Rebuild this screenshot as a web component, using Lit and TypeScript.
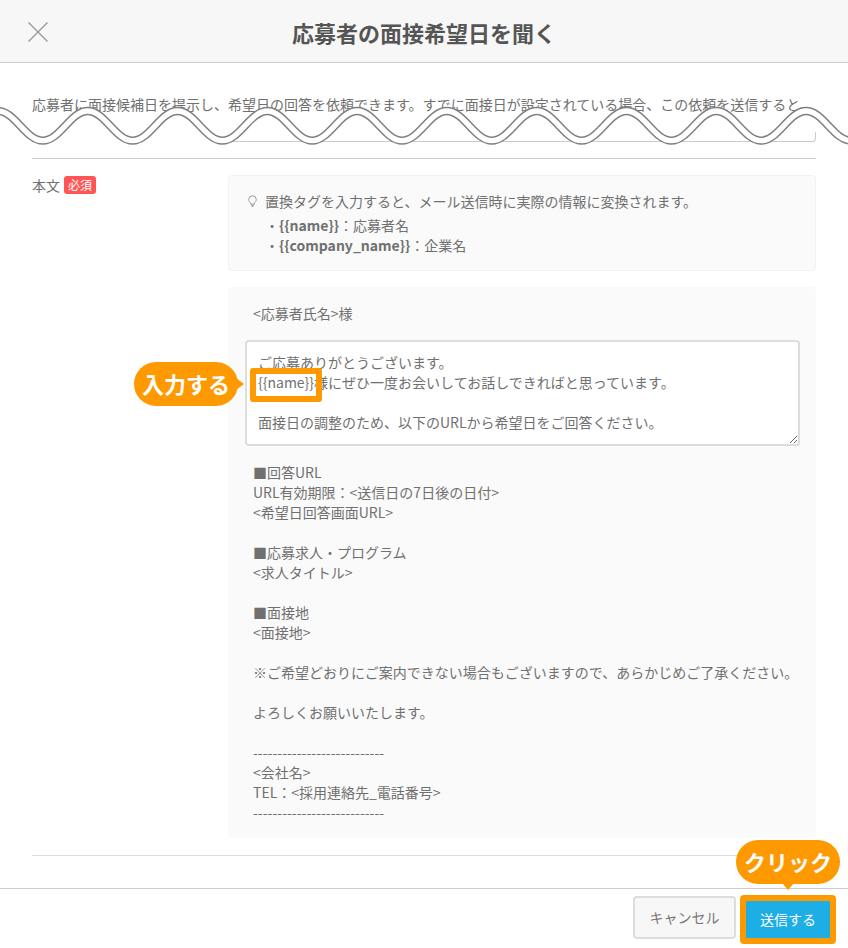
import { LitElement, html, css, svg } from "lit";
import { customElement } from "lit/decorators.js";

const MAIL_TAIL = `■回答URL
URL有効期限：<送信日の7日後の日付>
<希望日回答画面URL>

■応募求人・プログラム
<求人タイトル>

■面接地
<面接地>

※ご希望どおりにご案内できない場合もございますので、あらかじめご了承ください。

よろしくお願いいたします。

---------------------------
<会社名>
TEL：<採用連絡先_電話番号>
---------------------------`;

function wavePath(): string {
  const half = 44.9;
  const top = 111;
  const bottom = 140.7;
  let x = -47;
  let d = `M${x} ${bottom}`;
  let up = true;
  while (x < 880) {
    const y = up ? top : bottom;
    const from = up ? bottom : top;
    d += ` C${(x + 17).toFixed(1)} ${from} ${(x + half - 17).toFixed(1)} ${y} ${(x + half).toFixed(1)} ${y}`;
    x += half;
    up = !up;
  }
  return d;
}

@customElement("app-root")
export class AppRoot extends LitElement {
  static styles = css`
    :host {
      display: block;
      width: 848px;
      height: 948px;
      position: relative;
      overflow: hidden;
      background: #fff;
      color: #707070;
      font-family: "Noto Sans CJK JP", "Noto Sans", sans-serif;
      font-size: 14px;
      line-height: 20px;
    }
    .page { display: flex; flex-direction: column; height: 948px; }
    .head {
      height: 62px;
      flex: none;
      background: #f7f7f7;
      border-bottom: 1px solid #ccc;
      display: flex;
      align-items: center;
      justify-content: center;
      position: relative;
    }
    .close { position: absolute; left: 27px; top: 21px; width: 22px; height: 22px; }
    .title { font-size: 22px; font-weight: 700; color: #555; line-height: 28px; margin-top: 2px; }
    .body { flex: 1; padding: 31px 32px 0; overflow: hidden; }
    .intro { white-space: nowrap; overflow: hidden; height: 20px; }
    .stub {
      margin: 18px 0 0 196px;
      height: 10px;
      box-sizing: border-box;
      border-bottom: 1px solid #ccc;
      border-right: 1px solid #ccc;
      border-radius: 0 0 4px 0;
    }
    .rule { height: 1px; background: #ccc; margin-top: 16px; }
    .rule.end { margin-top: 17px; background: #ddd; }
    .row { display: grid; grid-template-columns: 196px 588px; margin-top: 16px; }
    .label { display: flex; align-items: flex-start; gap: 4px; line-height: 18px; margin-top: 1px; }
    .req {
      background: #f55;
      color: #fff;
      font-size: 12px;
      line-height: 17px;
      height: 18px;
      width: 32px;
      text-align: center;
      border-radius: 3px;
    }
    .info {
      box-sizing: border-box;
      height: 96px;
      padding: 15px 16px 14px;
      background: #fafafa;
      border: 1px solid #f2f2f2;
      border-radius: 4px;
    }
    .tip { display: flex; align-items: center; gap: 8px; margin-bottom: 4px; }
    .tip svg { width: 9px; height: 12px; flex: none; margin-left: 3px; }
    .tag { padding-left: 20px; }
    .tag b { font-weight: 700; }
    .mail {
      margin-top: 16px;
      background: #fafafa;
      border-radius: 4px;
      padding: 16px 0 15px 17px;
      height: 551px;
      box-sizing: border-box;
    }
    .mail-head { padding-left: 8px; }
    textarea {
      display: block;
      box-sizing: border-box;
      width: 555px;
      height: 106px;
      margin: 17px 0 16px;
      padding: 10px 11px;
      border: 2px solid #ddd;
      border-radius: 4px;
      background: #fff;
      color: #707070;
      font: inherit;
      overflow: hidden;
      resize: vertical;
      outline: none;
    }
    .mail-tail { white-space: pre-line; padding-left: 8px; }
    .foot {
      height: 60px;
      flex: none;
      box-sizing: border-box;
      border-top: 1px solid #ccc;
      display: flex;
      justify-content: flex-end;
      align-items: flex-start;
      gap: 4px;
      padding: 7px 12px 0 0;
    }
    button { font: inherit; cursor: pointer; box-sizing: border-box; }
    .cancel {
      width: 103px;
      height: 43px;
      background: #f7f7f7;
      color: #777;
      border: 2px solid #ddd;
      border-radius: 4px;
      padding: 0 0 2px;
    }
    .send {
      width: 96px;
      height: 49px;
      margin-top: -1px;
      background: #1eaee6;
      color: #fff;
      border: 6px solid #ff9900;
      border-radius: 4px;
      padding: 0 0 2px;
    }
    .wave { position: absolute; left: 0; top: 0; width: 848px; height: 160px; pointer-events: none; }
    .hl {
      position: absolute;
      left: 250px;
      top: 368px;
      width: 72px;
      height: 34px;
      box-sizing: border-box;
      border: 6px solid #ff9900;
      border-radius: 3px;
    }
    .bubble {
      position: absolute;
      width: 104px;
      height: 44px;
      border-radius: 22px;
      background: #ff9900;
      color: #fff;
      font-size: 22px;
      font-weight: 700;
      line-height: 42px;
      text-align: center;
    }
    .bubble.input { left: 134px; top: 362px; }
    .bubble.input::after {
      content: "";
      position: absolute;
      left: 102px;
      top: 16px;
      border-left: 8px solid #ff9900;
      border-top: 6px solid transparent;
      border-bottom: 6px solid transparent;
    }
    .bubble.click { left: 736px; top: 840px; }
    .bubble.click::after {
      content: "";
      position: absolute;
      left: 46px;
      top: 43px;
      border-top: 7px solid #ff9900;
      border-left: 6px solid transparent;
      border-right: 6px solid transparent;
    }
  `;

  render() {
    const d = wavePath();
    return html`
      <div class="page">
        <div class="head">
          <svg class="close" viewBox="0 0 22 22" fill="none" stroke="#999" stroke-width="1.4">
            <path d="M1.5 1.5L20.5 20.5M20.5 1.5L1.5 20.5" />
          </svg>
          <div class="title">応募者の面接希望日を聞く</div>
        </div>
        <div class="body">
          <div class="intro">応募者に面接候補日を提示し、希望日の回答を依頼できます。すでに面接日が設定されている場合、この依頼を送信すると、</div>
          <div class="stub"></div>
          <div class="rule"></div>
          <div class="row">
            <div class="label"><span>本文</span><span class="req">必須</span></div>
            <div>
              <div class="info">
                <div class="tip">
                  <svg viewBox="0 0 10 13" fill="none" stroke="#999" stroke-width="1.1">
                    <path d="M3 8.6C1.6 7.7.8 6.4.8 4.9a4.2 4.2 0 0 1 8.4 0c0 1.5-.8 2.8-2.2 3.7V10H3z" />
                    <path d="M3.4 11.2h3.2M4 12.5h2" />
                  </svg>
                  <span>置換タグを入力すると、メール送信時に実際の情報に変換されます。</span>
                </div>
                <div class="tag">・<b>{{name}}</b>：応募者名</div>
                <div class="tag">・<b>{{company_name}}</b>：企業名</div>
              </div>
              <div class="mail">
                <div class="mail-head">${"<応募者氏名>様"}</div>
                <textarea spellcheck="false">ご応募ありがとうございます。
{{name}}様にぜひ一度お会いしてお話しできればと思っています。

面接日の調整のため、以下のURLから希望日をご回答ください。</textarea>
                <div class="mail-tail">${MAIL_TAIL}</div>
              </div>
            </div>
          </div>
          <div class="rule end"></div>
        </div>
        <div class="foot">
          <button class="cancel">キャンセル</button>
          <button class="send">送信する</button>
        </div>
      </div>
      <svg class="wave" viewBox="0 0 848 160" fill="none">
        ${svg`<path d=${d} stroke="#808080" stroke-width="8.3" />
        <path d=${d} stroke="#fff" stroke-width="5.3" />`}
      </svg>
      <div class="hl"></div>
      <div class="bubble input">入力する</div>
      <div class="bubble click">クリック</div>
    `;
  }
}
